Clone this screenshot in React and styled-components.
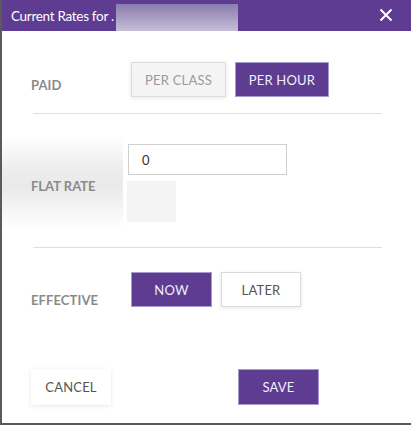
import React from "react";
import styled, { createGlobalStyle } from "styled-components";

const Global = createGlobalStyle`
  html, body { margin: 0; padding: 0; background: #fff; }
  * { box-sizing: border-box; }
  body { font-family: "Lato", "Open Sans", sans-serif; }
`;

const PURPLE = "#5d3c92";

const Dialog = styled.div`
  width: 411px;
  height: 425px;
  border-left: 2px solid #5a5a5a;
  border-bottom: 2px solid #5a5a5a;
  background: #fff;
  display: flex;
  flex-direction: column;
`;

const Header = styled.div`
  height: 31px;
  background: ${PURPLE};
  display: flex;
  align-items: center;
  padding: 0 16px 0 9px;
  color: #fff;
  font-size: 13.5px;
`;

const Title = styled.span`
  display: flex;
  align-items: center;
  height: 100%;
  letter-spacing: -0.3px;
`;

const Blur = styled.span`
  display: inline-block;
  width: 122px;
  height: 27px;
  margin: 4px 0 0 2px;
  align-self: flex-start;
  background: linear-gradient(to bottom, #8a7cad, #c4bed8);
`;

const Close = styled.button`
  margin-left: auto;
  background: none;
  border: 0;
  padding: 0;
  width: 16px;
  height: 16px;
  display: flex;
  cursor: pointer;
`;

const Row = styled.div`
  display: flex;
  align-items: flex-start;
  padding: ${(p) => p.$pad || "0"};
`;

const Label = styled.div`
  width: ${(p) => p.$w || "100px"};
  padding-top: ${(p) => p.$top || "0"};
  font-size: 13px;
  font-weight: 700;
  color: #8a8a8a;
  letter-spacing: 0.1px;
`;

const Buttons = styled.div`
  display: flex;
  gap: 9px;
`;

const Btn = styled.button`
  width: ${(p) => p.$w || "80px"};
  height: ${(p) => p.$h || "35px"};
  font-family: inherit;
  font-size: 13px;
  letter-spacing: 0.2px;
  border: 1px solid ${(p) => (p.$variant === "primary" ? "#a99bcc" : p.$variant === "muted" ? "#dcdcdc" : p.$variant === "plain" ? "transparent" : "#dadada")};
  background: ${(p) => (p.$variant === "primary" ? PURPLE : p.$variant === "muted" ? "#f4f4f4" : "#fff")};
  color: ${(p) => (p.$variant === "primary" ? "#f2eef8" : p.$variant === "muted" ? "#9a9a9a" : "#555")};
  box-shadow: ${(p) => (p.$variant === "primary" ? "none" : "0 1px 4px rgba(0,0,0,0.10)")};
  padding: 0;
  cursor: pointer;
`;

const Divider = styled.hr`
  margin: ${(p) => p.$m || "0"};
  margin-left: 31px;
  margin-right: 29px;
  border: 0;
  border-top: 1px solid #dedede;
  height: 0;
`;

const RateRow = styled.div`
  display: flex;
  align-items: flex-start;
  margin-top: 22px;
  height: 93px;
`;

const ShadedLabel = styled.div`
  width: 121px;
  height: 93px;
  display: flex;
  align-items: center;
  padding-left: 29px;
  padding-top: 6px;
  font-size: 13px;
  font-weight: 700;
  color: #8a8a8a;
  background: linear-gradient(
    to bottom,
    rgba(255, 255, 255, 1) 0%,
    #ececec 38%,
    #eaeaea 55%,
    rgba(255, 255, 255, 1) 100%
  );
`;

const InputCol = styled.div`
  display: flex;
  flex-direction: column;
  gap: 6px;
  padding: 8px 0 0 5px;
`;

const Input = styled.input`
  width: 159px;
  height: 31px;
  border: 1px solid #cfcfcf;
  padding: 0 13px;
  font-family: inherit;
  font-size: 13px;
  color: #333;
  outline: none;
`;

const Placeholder = styled.div`
  width: 49px;
  height: 41px;
  margin-left: -1px;
  background: #f3f3f3;
`;

const Footer = styled.div`
  display: flex;
  padding: 0 0 0 29px;
  gap: 127px;
  margin-top: 61px;
`;

export default function App() {
  return (
    <>
      <Global />
      <Dialog>
        <Header>
          <Title>Current Rates for .</Title>
          <Blur />
          <Close aria-label="close">
            <svg width="14" height="14" viewBox="0 0 14 14">
              <path d="M1.5 1.5 L12.5 12.5 M12.5 1.5 L1.5 12.5" stroke="#fff" strokeWidth="2" />
            </svg>
          </Close>
        </Header>

        <Row $pad="31px 0 0 29px">
          <Label $top="15px">PAID</Label>
          <Buttons>
            <Btn $variant="muted" $w="95px">PER CLASS</Btn>
            <Btn $variant="primary" $w="94px">PER HOUR</Btn>
          </Buttons>
        </Row>
        <Divider $m="16px 0 0 0" />

        <RateRow>
          <ShadedLabel>FLAT RATE</ShadedLabel>
          <InputCol>
            <Input defaultValue="0" />
            <Placeholder />
          </InputCol>
        </RateRow>
        <Divider $m="18px 0 0 0" />

        <Row $pad="24px 0 0 29px">
          <Label $top="20px">EFFECTIVE</Label>
          <Buttons>
            <Btn $variant="primary" $w="81px">NOW</Btn>
            <Btn $w="80px">LATER</Btn>
          </Buttons>
        </Row>

        <Footer>
          <Btn $variant="plain" $w="80px" $h="36px">CANCEL</Btn>
          <Btn $variant="primary" $w="81px" $h="36px">SAVE</Btn>
        </Footer>
      </Dialog>
    </>
  );
}
